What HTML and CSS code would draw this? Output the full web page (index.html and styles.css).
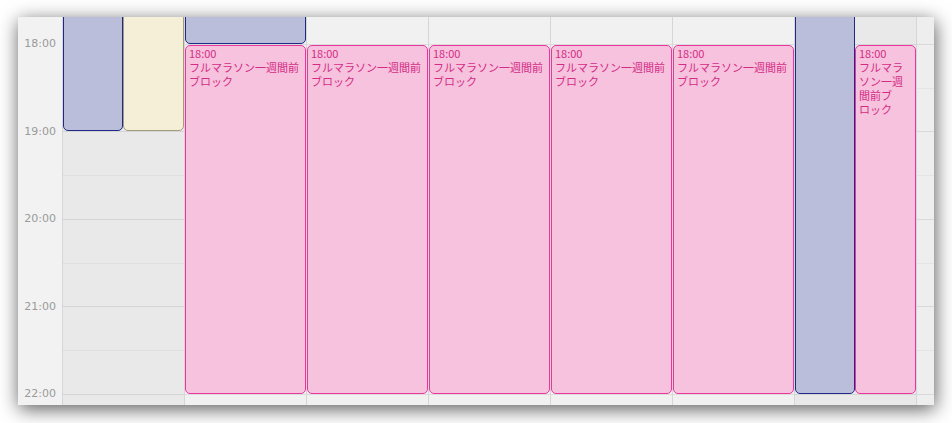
FILE: index.html
```html
<!DOCTYPE html>
<html lang="ja">
  <head>
    <meta charset="UTF-8" />
    <meta name="viewport" content="width=device-width, initial-scale=1.0" />
    <title>Calendar week</title>
    <link rel="stylesheet" href="styles.css">
  </head>
  <body>
    <div class="window">
      <div class="gutter">
        <div class="hour">18:00</div>
        <div class="hour">19:00</div>
        <div class="hour">20:00</div>
        <div class="hour">21:00</div>
        <div class="hour">22:00</div>
      </div>

      <div class="day weekend">
        <div class="event blue till19 left-half"></div>
        <div class="event yellow till19 right-half"></div>
      </div>
      <div class="day">
        <div class="event blue till18"></div>
        <div class="event pink evening">
          <div class="time">18:00</div>
          <div class="title">フルマラソン一週間前ブロック</div>
        </div>
      </div>
      <div class="day">
        <div class="event pink evening">
          <div class="time">18:00</div>
          <div class="title">フルマラソン一週間前ブロック</div>
        </div>
      </div>
      <div class="day">
        <div class="event pink evening">
          <div class="time">18:00</div>
          <div class="title">フルマラソン一週間前ブロック</div>
        </div>
      </div>
      <div class="day">
        <div class="event pink evening">
          <div class="time">18:00</div>
          <div class="title">フルマラソン一週間前ブロック</div>
        </div>
      </div>
      <div class="day">
        <div class="event pink evening">
          <div class="time">18:00</div>
          <div class="title">フルマラソン一週間前ブロック</div>
        </div>
      </div>
      <div class="day weekend">
        <div class="event blue till22 left-half"></div>
        <div class="event pink evening right-half">
          <div class="time">18:00</div>
          <div class="title">フルマラソン一週間前ブロック</div>
        </div>
      </div>

      <div class="strip"></div>
    </div>
  </body>
</html>
```

FILE: styles.css
```css
body {
  margin: 0;
  background-color: #ffffff;
  height: 100vh;
  overflow: hidden;
}
.window {
  display: flex;
  width: 916px;
  height: 388px;
  margin: 17px 0 0 18px;
  background-color: #f2f2f2;
  overflow: hidden;
  box-shadow: 1px 4px 18px rgba(0, 0, 0, 0.65);
  --hr: rgba(0, 0, 0, 0.085);
  --half: rgba(0, 0, 0, 0.045);
}
.gutter {
  width: 44px;
  flex: none;
  padding-top: 20px;
  box-sizing: border-box;
  background-color: #f2f2f2;
  font-family: "DejaVu Sans", sans-serif;
  font-size: 11px;
  color: #9a9a9a;
}
.hour {
  height: 87.5px;
  line-height: 14px;
  text-align: right;
  padding-right: 6px;
}
.day,
.strip {
  position: relative;
  flex: none;
  border-left: 1px solid #d6d6d6;
  background-color: #f1f1f1;
  background-image: linear-gradient(
    to bottom,
    var(--hr) 0 1px,
    transparent 1px 44px,
    var(--half) 44px 45px,
    transparent 45px 87px,
    var(--hr) 87px 88px,
    transparent 88px 131px,
    var(--half) 131px 132px,
    transparent 132px
  );
  background-size: 100% 175px;
  background-position: 0 27px;
  background-repeat: repeat-y;
}
.day {
  width: 121px;
}
.day.weekend {
  background-color: #e9e9e9;
}
.strip {
  width: 17px;
  background-color: #eeeeee;
}
.event {
  position: absolute;
  left: 0;
  right: 0;
  box-sizing: border-box;
  border-radius: 5px;
  padding: 0 3px;
  font-family: "Noto Sans CJK JP", sans-serif;
  font-size: 11px;
  line-height: 14px;
  line-break: strict;
  overflow: hidden;
}
.left-half {
  right: auto;
  width: 60px;
}
.right-half {
  left: 60px;
}
.blue {
  background-color: #babedb;
  border: 1px solid #1f2a86;
}
.yellow {
  background-color: #f4efd6;
  border: 1px solid #a39d7c;
}
.pink {
  background-color: #f6c2de;
  border: 1px solid #e8389c;
  color: #d42c84;
}
.till18 {
  top: -12px;
  height: 39px;
}
.till19 {
  top: -12px;
  height: 126px;
}
.till22 {
  top: -12px;
  height: 389px;
}
.evening {
  top: 28px;
  height: 349px;
}
```
